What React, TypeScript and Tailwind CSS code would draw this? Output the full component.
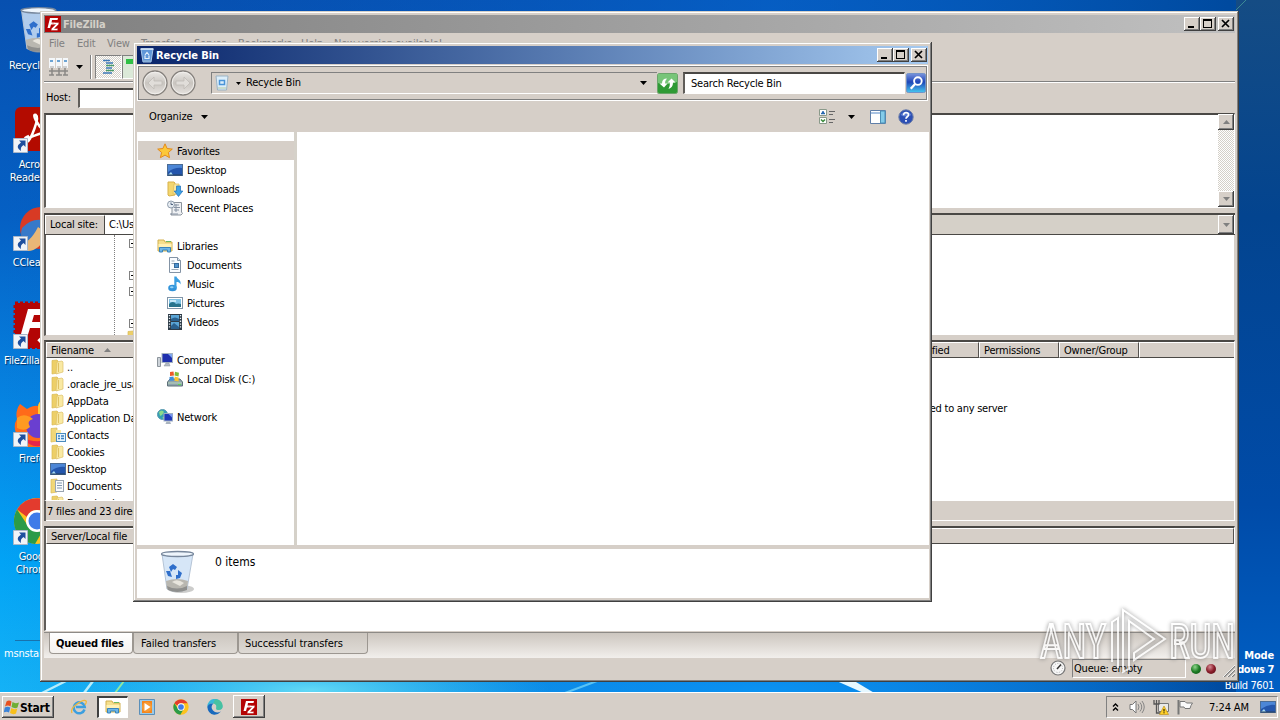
import React from 'react';

type IconName =
  | 'star' | 'desktop' | 'downloads' | 'recent' | 'libraries' | 'document' | 'music' | 'pictures'
  | 'videos' | 'computer' | 'disk' | 'network' | 'folder' | 'contacts' | 'docfolder';

const RAISED = 'bg-[#d6cfc8] shadow-[inset_-1px_-1px_#404040,inset_1px_1px_#fff,inset_-2px_-2px_#808080]';
const FRAME = 'bg-[#d6cfc8] shadow-[inset_-1px_-1px_#404040,inset_1px_1px_#d4d0c8,inset_-2px_-2px_#808080,inset_2px_2px_#fff]';
const SUNKEN = 'border-l-2 border-t-2 border-r border-b border-l-[#605d59] border-t-[#4a4845] border-r-white border-b-white';

/* ---------- icons ---------- */

const Icon = ({ name }: { name: IconName }) => {
  const body: Record<IconName, React.ReactNode> = {
    star: <path d="M8 .8l2.1 4.7 5.2.6-3.9 3.4 1.1 5.2L8 12.1l-4.6 2.6 1.2-5.2L.7 6.1l5.2-.6z" fill="#fcc838" stroke="#e48a1c" />,
    desktop: (
      <>
        <rect x=".5" y="2.5" width="15" height="11" fill="#2456ac" stroke="#4b6c94" />
        <path d="M1 3h14v3Q8 5 1 10z" fill="#4c86d6" />
        <path d="M1 13l3-3 2 3z" fill="#a8dcf5" />
        <path d="M1 13h14" stroke="#26405f" />
      </>
    ),
    downloads: (
      <>
        <path d="M1 1h6l1 1v12l-6 1-1-1z" fill="#f3d66f" stroke="#d8b14a" />
        <path d="M7 3h5v10H6z" fill="#fae9a2" stroke="#d9bb5d" strokeWidth=".7" />
        <path d="M9.5 5h4v5h2.300L11.500 15.500 7.200 10h2.300z" fill="#3fa2e6" stroke="#1c6fb8" strokeWidth=".7" />
      </>
    ),
    recent: (
      <>
        <path d="M5 2.500h9.500V12l1 1.500-1.500 1.500H4l1-2z" fill="#eef0f3" stroke="#8a929b" />
        <path d="M7 5h5M7 7.500h6M7 10h5M9 4v8M3 14h8" stroke="#8793a3" />
        <circle cx="4" cy="4.500" r="3.500" fill="#e6ecf2" stroke="#8f9cab" />
        <path d="M4 2.500v2h2" stroke="#506580" fill="none" />
      </>
    ),
    libraries: (
      <>
        <path d="M1 2h6l1 2h7v9H1z" fill="#f5df8d" stroke="#d2b04e" />
        <path d="M1.500 6h13v3h-13z" fill="#fff1b4" />
        <path d="M2.500 14V9.500h11V14h-3v-2h-5v2z" fill="#6eb6e6" stroke="#3984bd" />
        <path d="M9 3.500h5" stroke="#6dbb60" />
      </>
    ),
    document: (
      <>
        <path d="M2.500.5h8l3 3v12h-11z" fill="#fafcff" stroke="#8393a5" />
        <path d="M4.500 4h3M4.500 6.500h3M4.500 12.500h7" stroke="#9ba7b5" />
        <rect x="7.500" y="6.500" width="4" height="4" fill="#5092cd" stroke="#34699b" />
        <path d="M10.500.5v3h3" fill="#dce6f0" stroke="#8393a5" />
      </>
    ),
    music: (
      <>
        <ellipse cx="5.500" cy="12" rx="4.300" ry="3.200" fill="#3093da" />
        <path d="M7.300 12V.5h2.200c.5 3 5 3 4 8-.8-2-2-2.500-4-2.500v6z" fill="#3b9fe2" />
        <ellipse cx="4.800" cy="11.200" rx="1.800" ry="1" fill="#94d3f7" />
      </>
    ),
    pictures: (
      <>
        <rect x=".5" y="2.500" width="15" height="11" fill="#fff" stroke="#8195a8" />
        <path d="M2 4h12v8H2z" fill="#7fc2e4" />
        <path d="M2 12V9q4-4 7 0 2-1 5 0v3z" fill="#28738c" />
        <path d="M3 6h6" stroke="#dff4ff" strokeWidth="1.500" />
      </>
    ),
    videos: (
      <>
        <path d="M1 0h14v16H1z" fill="#2d3b47" />
        <path d="M4 1h8v6H4zM4 8h8v7H4z" fill="#5aa5d6" />
        <path d="M4 5q4-3 8 0v2H4zM4 12l3-3 5 4v2H4z" fill="#2a608d" />
        <path d="M2.500 1v14M13.500 1v14" stroke="#e6eef3" strokeWidth="1.300" strokeDasharray="1.300 1.500" />
      </>
    ),
    computer: (
      <>
        <path d="M.5 5.500h3v9h-3z" fill="#cdd3d9" stroke="#8d959c" />
        <rect x="5" y="1.500" width="10.500" height="9" fill="#1e2fae" stroke="#a5b3c2" />
        <path d="M11 2l4 0v4z" fill="#7ea6f0" />
        <path d="M9 11h3l1 3H7z" fill="#b3bbc4" stroke="#8a939d" strokeWidth=".5" />
      </>
    ),
    disk: (
      <>
        <path d="M.5 11L3 8h10l2.500 3v4H.5z" fill="#8fa3ad" stroke="#5d7078" />
        <path d="M1 12h14" stroke="#b9d8b9" />
        <path d="M11 13.500h3" stroke="#57df50" />
        <path d="M3 1l3.500-.5.500 4-4 .5z" fill="#ed5b2a" />
        <path d="M8 .8l4 1-.5 3.700-4-1z" fill="#80bd39" />
        <path d="M2.500 6l4-.6.5 4-4.500.4z" fill="#3e8ede" />
        <path d="M7.600 5.500l4 1v4l-4-.8z" fill="#fac52e" />
      </>
    ),
    network: (
      <>
        <circle cx="5.500" cy="5.500" r="5" fill="#339fb5" stroke="#5b9ab0" />
        <path d="M2 3q3-3 5 0l-2 3-2 1zM5 9l3-2v3z" fill="#8ddb8a" />
        <rect x="7" y="4.500" width="8.500" height="7.500" fill="#2038ba" stroke="#9fb0c2" />
        <path d="M11.500 5l4 0v4z" fill="#7896ee" />
        <path d="M9.500 12.500h3.500l1 2.500H8.500z" fill="#aab4be" />
      </>
    ),
    folder: (
      <>
        <path d="M2 1.500l5-.5 1 1v12l-6 1z" fill="#edcf68" stroke="#d9b955" strokeWidth=".7" />
        <path d="M7 3l5-1 1 1v10l-7 2z" fill="#f9e9a3" stroke="#dcc069" strokeWidth=".7" />
        <path d="M8.500 4v9" stroke="#e0c264" />
      </>
    ),
    contacts: (
      <>
        <path d="M1 1.500l6-.5v13l-6 1z" fill="#f1d778" stroke="#d9b955" strokeWidth=".7" />
        <path d="M6 3h5v10H6z" fill="#f9e9a3" />
        <rect x="6.500" y="6.500" width="9" height="8" fill="#e7f3fc" stroke="#4b8bbd" />
        <path d="M8 9h2M11 9h3M8 11.500h2M11 11.500h3" stroke="#3b83c0" strokeWidth="1.300" />
      </>
    ),
    docfolder: (
      <>
        <path d="M1 1.500l6-.5v13l-6 1z" fill="#f1d778" stroke="#d9b955" strokeWidth=".7" />
        <rect x="5.500" y="2.500" width="8" height="11" fill="#f9fbfd" stroke="#9aa5b1" />
        <path d="M7 5h5M7 7.500h5M7 10h5" stroke="#8298af" />
      </>
    ),
  };
  return <svg className="size-4 shrink-0" viewBox="0 0 16 16" fill="none">{body[name]}</svg>;
};

const Bin = ({ className }: { className: string }) => (
  <svg className={className} viewBox="0 0 36 44" fill="none">
    <ellipse cx="21" cy="39" rx="13" ry="4" fill="#9a9a98" opacity=".5" />
    <path d="M2 4l5 35q10 5 20 0l6-35z" fill="#cfe2f6" fillOpacity=".85" stroke="#b5c4d6" />
    <path d="M6 31q11-4 22 0l-1 8q-10 5-20 0z" fill="#b9b7b0" />
    <path d="M7 36q10 5 20 0v4q-10 4-19 0z" fill="#8f8f8d" />
    <path d="M12 32q5-4 12 1l-4 3z" fill="#e8e5dd" />
    <ellipse cx="17.500" cy="4" rx="16" ry="2.500" fill="#eef5fc" stroke="#77879c" strokeWidth="1.300" />
    <path d="M9 17l4-3 4 3-2 3-2-1-2 3zM6 21l4 0 2 6-4-1zM18 20l4 3-2 5-4 1v-4h2z" fill="#2f6fcb" />
  </svg>
);

const SmallBin = () => (
  <svg className="size-4" viewBox="0 0 16 16" fill="none">
    <path d="M2 2h12l-2 13H4z" fill="#5f96d8" stroke="#a8c8ea" />
    <path d="M1.500 2h13" stroke="#dcebfa" strokeWidth="1.500" />
    <path d="M6 8l2-2.500L10 8M6 8.500v3h4v-3" stroke="#e2effb" strokeWidth="1.200" />
    <path d="M4.500 14h7" stroke="#8cb0d6" strokeWidth="1.500" />
  </svg>
);

const FzLogo = ({ className }: { className: string }) => (
  <svg className={className} viewBox="0 0 16 16">
    <path d="M0 0h16v16H0z" fill="#b40404" />
    <path d="M5 2h8l-.5 2H7L6.500 6.500H10L9.500 8.500H6L5 12H2.500z" fill="#fff" />
    <path d="M8 6.500h6l-.5 2-4 4H13l-.5 2H6l.5-2 4-4H8z" fill="#fff" stroke="#b40404" strokeWidth=".4" />
  </svg>
);

const Chrome = ({ className }: { className: string }) => (
  <svg className={className} viewBox="0 0 48 48">
    <circle cx="24" cy="24" r="23" fill="#fcc31e" />
    <path d="M4.100 12.500A23 23 0 0 1 44 13H24a11 11 0 0 0-10 7z" fill="#e33b2e" />
    <path d="M4.100 12.500A23 23 0 0 0 22 47l10-17a10 10 0 0 1-17-1z" fill="#2b9b48" />
    <circle cx="24" cy="24" r="11" fill="#fff" />
    <circle cx="24" cy="24" r="8.500" fill="#3f7be8" />
  </svg>
);

const Shortcut = () => (
  <svg className="absolute left-0 bottom-0 size-[15px]" viewBox="0 0 15 15">
    <path d="M.5.500h14v14H.5z" fill="#f1f4f8" stroke="#aab7c9" />
    <path d="M6 2.500h6.500V9L10.500 7Q7 9 8 13 1.500 9 8 4.600z" fill="#1e4f9e" />
  </svg>
);

const Arrow = ({ up, grey }: { up?: boolean; grey?: boolean }) => (
  <svg className="w-[7px] h-1 shrink-0" viewBox="0 0 7 4">
    <path d={up ? 'M0 4h7L3.500 0z' : 'M0 0h7L3.500 4z'} fill={grey ? '#808080' : '#000'} />
  </svg>
);

/* ---------- shared window parts ---------- */

const CaptionButtons = () => (
  <div className="ml-auto mr-px flex items-center">
    <div className={`w-4 h-3.5 ${RAISED}`}>
      <svg viewBox="0 0 16 14"><path d="M4 9h6v2H4z" /></svg>
    </div>
    <div className={`w-4 h-3.5 ${RAISED}`}>
      <svg viewBox="0 0 16 14"><path d="M3 2h9v9H3zM4 4v6h7V4z" fillRule="evenodd" /></svg>
    </div>
    <div className={`w-4 h-3.5 ml-0.5 ${RAISED}`}>
      <svg viewBox="0 0 16 14"><path d="M4 3l7 7M11 3l-7 7" stroke="#000" strokeWidth="1.700" /></svg>
    </div>
  </div>
);

const HeaderCell = ({ className = '', children }: { className?: string; children?: React.ReactNode }) => (
  <div className={`h-4 shrink-0 flex items-center pl-1 overflow-hidden border-t border-l border-white border-r border-r-[#55524f] border-b border-b-[#4a4845] bg-[#d6cfc8] ${className}`}>
    {children}
  </div>
);

/* ---------- desktop ---------- */

const Wallpaper = () => (
  <svg className="absolute inset-0 size-full" viewBox="0 0 1280 720" preserveAspectRatio="none">
    <defs>
      <linearGradient id="sky" x1="0" y1="0" x2="0" y2="1">
        <stop offset="0" stopColor="#0750b0" />
        <stop offset=".3" stopColor="#0560c4" />
        <stop offset=".6" stopColor="#0689e6" />
        <stop offset=".78" stopColor="#02a3f5" />
        <stop offset="1" stopColor="#19b5f6" />
      </linearGradient>
      <linearGradient id="dark" x1="0" y1="0" x2="1" y2="0">
        <stop offset="0" stopColor="#0550b4" stopOpacity="0" />
        <stop offset=".6" stopColor="#0566cf" stopOpacity=".6" />
        <stop offset=".96" stopColor="#004a9f" />
        <stop offset="1" stopColor="#044d9e" />
      </linearGradient>
      <linearGradient id="rside" x1="0" y1="0" x2="0" y2="1">
        <stop offset="0" stopColor="#154c84" />
        <stop offset=".3" stopColor="#03448f" />
        <stop offset=".7" stopColor="#004ba8" />
        <stop offset="1" stopColor="#0062c8" />
      </linearGradient>
      <radialGradient id="glow"><stop offset="0" stopColor="#62d8f5" /><stop offset="1" stopColor="#37c5f5" stopOpacity="0" /></radialGradient>
      <radialGradient id="glow2"><stop offset="0" stopColor="#0a92f2" /><stop offset="1" stopColor="#0a80e8" stopOpacity="0" /></radialGradient>
    </defs>
    <path d="M0 0h1280v720H0z" fill="url(#sky)" />
    <path d="M0 0h1280v720H0z" fill="url(#dark)" />
    <path d="M1236 0h44v720h-44z" fill="url(#rside)" />
    <ellipse cx="760" cy="690" rx="460" ry="60" fill="url(#glow2)" />
    <ellipse cx="310" cy="690" rx="240" ry="40" fill="url(#glow)" />
    <path d="M42 693l24-12M84 693l9-12" stroke="#b5ecfb" strokeWidth="2.500" />
    <path d="M115 693l9-12" stroke="#8de8a4" strokeWidth="2" />
    <path d="M565 693l32-12" stroke="#58c3f5" strokeWidth="2" />
    <path d="M832 679l34 15h10l-25-15z" fill="#e6f8ff" />
    <path d="M1236 10l12-12" stroke="#3c8b96" />
  </svg>
);

const DesktopIcon = ({ className, label, children, link = true }: { className: string; label: string; children?: React.ReactNode; link?: boolean }) => (
  <div className={`absolute ${className}`}>
    <div className="relative h-12 ml-[13px] w-12">
      {children}
      {link && <Shortcut />}
    </div>
    <div className="pt-[5px] pl-px whitespace-pre leading-[13px] text-white [text-shadow:1px_1px_1px_#00305f]">{label}</div>
  </div>
);

const Desktop = () => (
  <>
    <Wallpaper />
    <DesktopIcon className="left-2 top-1.5" label="Recycle Bin" link={false}><Bin className="h-12 w-11 -ml-1" /></DesktopIcon>
    <DesktopIcon className="left-0 top-[105px]" label={'      Acrobat\n   Reader DC'}>
      <svg viewBox="0 0 48 48">
        <rect x="2" y="2" width="44" height="44" rx="6" fill="#b30b00" />
        <path d="M10 35q25-10 29-9c4 3-3 4-8 0C25 21 18 8 23 10c4 2-5 25-9 27-4 1-4-4 2-6" fill="none" stroke="#fff" strokeWidth="2.500" />
      </svg>
    </DesktopIcon>
    <DesktopIcon className="left-0 top-[203px]" label="    CCleaner">
      <svg viewBox="0 0 48 48">
        <circle cx="28" cy="25" r="21" fill="#d83a24" />
        <path d="M9 25Q24 9 44 24L26 27 12 44Q6 33 9 25z" fill="#3779c9" />
        <path d="M7 41Q17 40 25 24l10 7Q26 48 15 48z" fill="#e9b777" />
      </svg>
    </DesktopIcon>
    <DesktopIcon className="left-0 top-[301px]" label=" FileZilla Client">
      <svg viewBox="0 0 48 48">
        <path d="M2 2h45v45H2z" fill="#b30505" stroke="#b30505" strokeWidth="3" strokeDasharray="3 2" />
        <path d="M15 8h30l-2 6H21l-2 7h14l-2 6H17l-4 13H6z" fill="#fff" />
        <path d="M27 22h19L26 41" stroke="#fff" strokeWidth="5" fill="none" />
      </svg>
    </DesktopIcon>
    <DesktopIcon className="left-0 top-[399px]" label="      Firefox">
      <svg viewBox="0 0 48 48">
        <path d="M4 20Q2 12 7 5l7 5q7-4 11-3 1-5 5-6 0 7 8 11 10 8 8 20a22 22 0 0 1-43 2q-3-8 1-14z" fill="#ff6a1a" />
        <path d="M25 8q0-5 5-7 0 7 8 11 6 6 7 12-10-12-20-8z" fill="#ffcb36" />
        <circle cx="25" cy="27" r="12" fill="#6a3fd0" />
        <path d="M4 29q8 4 13-1-4-6 3-8-9-7-16-1z" fill="#ff9a21" />
        <path d="M9 38q14 8 30 1l-5 6q-15 7-25-7z" fill="#e6254b" />
      </svg>
    </DesktopIcon>
    <DesktopIcon className="left-0 top-[497px]" label={'      Google\n     Chrome'}><Chrome className="size-12" /></DesktopIcon>
    <div className="absolute left-[15px] top-[640px] w-12 h-px bg-[#1872ad]" />
    <div className="absolute left-1 top-[647px] text-white">msnstall.exe</div>
    <div className="absolute right-1.5 top-[649px] text-right text-white leading-[14px]">
      <div className="font-bold [word-spacing:3px]">Test Mode</div>
      <div className="font-bold tracking-[-0.4px]">Windows 7</div>
      <div className="mt-0.5 tracking-[-0.4px]">Build 7601</div>
    </div>
  </>
);

/* ---------- FileZilla ---------- */

const files: { name: string; icon: IconName }[] = [
  { name: '..', icon: 'folder' },
  { name: '.oracle_jre_usage', icon: 'folder' },
  { name: 'AppData', icon: 'folder' },
  { name: 'Application Data', icon: 'folder' },
  { name: 'Contacts', icon: 'contacts' },
  { name: 'Cookies', icon: 'folder' },
  { name: 'Desktop', icon: 'desktop' },
  { name: 'Documents', icon: 'docfolder' },
  { name: 'Downloads', icon: 'folder' },
];

const TreeBox = ({ className }: { className: string }) => (
  <div className={`absolute left-[83px] size-[9px] border border-[#808080] bg-white flex items-center justify-center ${className}`}>
    <div className="w-[5px] h-px bg-black" />
  </div>
);

const FileZilla = () => (
  <div className={`absolute left-10 top-[11px] w-[1199px] h-[671px] p-1 flex flex-col overflow-hidden ${FRAME}`}>
    <div className="h-[18px] shrink-0 flex items-center pl-px bg-linear-to-r from-[#808080] to-[#c0c0c0]">
      <FzLogo className="size-4" />
      <span className="ml-0.5 pt-0.5 font-bold text-[#d4d0c8]">FileZilla</span>
      <CaptionButtons />
    </div>
    <div className="h-[19px] pt-0.5 shrink-0 flex items-center text-[#808080]">
      <span className="w-7 ml-[5px]">File</span>
      <span className="w-[30px]">Edit</span>
      <span className="w-[34px]">View</span>
      <span className="w-[53px]">Transfer</span>
      <span className="w-11">Server</span>
      <span className="w-[63px]">Bookmarks</span>
      <span className="w-[33px]">Help</span>
      <span>New version available!</span>
    </div>
    <div className="h-[31px] shrink-0 flex items-center border-b border-b-white shadow-[inset_0_-1px_#808080]">
      <svg className="size-5 ml-[5px]" viewBox="0 0 20 20">
        <path d="M0 1h6v10H0zM7 1h6v10H7zM14 1h5v10h-5z" fill="#f4f7fa" />
        <path d="M1 4h3M8 4h3M15 4h3" stroke="#6ca4d4" strokeWidth="2" />
        <path d="M1 10h4M8 10h4M14 10h4" stroke="#a9a9a9" />
        <path d="M3 11v7M10 11v7M16 11v7M0 14h19M0 18h5M7 18h6M14 18h5" stroke="#8b8985" strokeWidth="1.500" />
      </svg>
      <div className="ml-[7px]"><Arrow /></div>
      <div className="ml-[7px] mr-[3px] h-6 w-0.5 border-l border-[#808080] bg-white" />
      <div className="w-[27px] h-6 border border-t-[#808080] border-l-[#808080] border-white bg-[repeating-conic-gradient(#d4d0c8_0_25%,#fff_0_50%)] bg-[length:2px_2px] flex items-center justify-center">
        <svg className="size-4" viewBox="0 0 16 16">
          <path d="M2 1.500h7M5 4h7M5 9h6M2 14h9" stroke="#3d78b8" strokeWidth="1.300" />
          <path d="M5 6.500h8M5 11.500h8" stroke="#4b9c68" strokeWidth="1.300" />
        </svg>
      </div>
      <div className="w-[27px] h-6 border border-t-[#808080] border-l-[#808080] border-white bg-[#dbe9d8] pt-[3px] pl-[3px]">
        <div className="h-[5px] bg-[#2fc045]" />
      </div>
    </div>
    <div className="h-[30px] shrink-0 flex items-center pl-0.5">
      <span className="w-8">Host:</span>
      <div className={`w-[120px] h-5 bg-white ${SUNKEN}`} />
    </div>
    <div className={`h-[95px] shrink-0 flex justify-end bg-white ${SUNKEN}`}>
      <div className="w-4 flex flex-col bg-[repeating-conic-gradient(#d4d0c8_0_25%,#fff_0_50%)] bg-[length:2px_2px]">
        <div className={`-mt-px h-4 flex items-center justify-center ${RAISED}`}><Arrow up grey /></div>
        <div className={`h-4 mt-auto flex items-center justify-center ${RAISED}`}><Arrow grey /></div>
      </div>
    </div>

    <div className="mt-[5px] h-[22px] shrink-0 flex bg-[#d6cfc8] border-t-2 border-b border-l border-[#4a4845]">
      <div className="w-[60px] pl-1 flex items-center border-t border-l border-white border-r border-r-[#4a4845]">Local site:</div>
      <div className="w-[520px] pl-1 flex items-center bg-white">C:\Users\admin\</div>
      <div className="flex-1 flex justify-end bg-[#d5d0c8] border-r border-white">
        <div className={`w-4 flex items-center justify-center ${RAISED}`}><Arrow grey /></div>
      </div>
    </div>
    <div className="relative h-[101px] shrink-0 bg-white border-l-2 border-l-[#605d59] border-r border-r-[#d6cfc8] border-b border-b-[#d6cfc8] overflow-hidden">
      <div className="absolute left-[68px] top-0 h-full border-l border-dotted border-[#808080]" />
      <TreeBox className="top-1" />
      <TreeBox className="top-9" />
      <TreeBox className="top-[52px]" />
      <TreeBox className="top-[84px]" />
      <div className="absolute left-[80px] top-[95px]"><Icon name="folder" /></div>
    </div>

    <div className={`mt-1 h-[161px] shrink-0 flex bg-white ${SUNKEN}`}>
      <div className="w-[592px] flex flex-col overflow-hidden">
        <HeaderCell className="w-full gap-2.5"><span className="pt-0.5">Filename</span> <Arrow up grey /></HeaderCell>
        {files.map((f) => (
          <div key={f.name} className="h-[17px] shrink-0 flex items-center pl-1">
            <Icon name={f.icon} />
            <span className="ml-px pt-0.5">{f.name}</span>
          </div>
        ))}
      </div>
      <div className="flex-1">
        <div className="flex justify-end">
          <HeaderCell className="flex-1" />
          <HeaderCell className="w-[100px]"><span className="pt-0.5 pl-px">Last modified</span></HeaderCell>
          <HeaderCell className="w-20"><span className="pt-0.5">Permissions</span></HeaderCell>
          <HeaderCell className="w-20"><span className="pt-0.5">Owner/Group</span></HeaderCell>
          <HeaderCell className="w-[95px] border-r-0" />
        </div>
        <div className="mt-11 pr-[227px] text-right tracking-[-0.25px]">Not connected to any server</div>
      </div>
    </div>
    <div className="h-5 pt-0.5 shrink-0 flex items-center pl-px border-l-2 border-[#605d59] shadow-[inset_0_-1px_#fff,inset_-1px_0_#fff]">
      7 files and 23 directories. Total size: 2,118,456 bytes
    </div>

    <div className={`mt-[5px] h-[105px] shrink-0 bg-white ${SUNKEN}`}>
      <HeaderCell className="w-full"><span className="pt-0.5">Server/Local file</span></HeaderCell>
    </div>
    <div className="h-0.5 shrink-0 border-b border-[#8d8a86]" />
    <div className="h-[25px] shrink-0 flex items-start pl-[5px] bg-linear-to-b from-[#ccc6bf] to-[#f2efec]">
      <div className="w-[84px] h-[21px] pl-1.5 pt-0.5 flex items-center font-bold bg-linear-to-b from-white to-[#f4f1ee] rounded-b-sm border border-t-0 border-[#9c9791]">Queued files</div>
      <div className="w-[105px] h-[21px] pl-[7px] pt-0.5 flex items-center tracking-[-0.05px] bg-linear-to-b from-[#ccc6bf] to-[#dedad5] rounded-b-sm border border-t-0 border-[#9c9791]">Failed transfers</div>
      <div className="w-[130px] h-[21px] pl-1.5 pt-0.5 flex items-center tracking-[-0.1px] bg-linear-to-b from-[#ccc6bf] to-[#dedad5] rounded-b-sm border border-t-0 border-[#9c9791]">Successful transfers</div>
    </div>
    <div className="h-5 shrink-0 flex items-center justify-end">
      <svg className="size-4 mr-[6px]" viewBox="0 0 16 16">
        <circle cx="8" cy="8" r="7" fill="#f7f7f7" stroke="#777" strokeWidth="1.200" />
        <circle cx="8" cy="8" r="4.500" fill="none" stroke="#aaa" strokeDasharray="1 1.500" />
        <path d="M7 9l4-4.500" stroke="#333" strokeWidth="1.500" />
      </svg>
      <div className="w-[114px] h-[19px] mt-px flex items-center pl-px pt-px border border-[#808080] border-r-white border-b-white">Queue: empty</div>
      <div className="ml-[5px] mt-px size-2.5 rounded-full bg-radial-[at_40%_30%] from-[#8fd58c] via-[#1c7c24] to-[#0d4a14]" />
      <div className="ml-[5px] mt-px size-2.5 rounded-full bg-radial-[at_40%_30%] from-[#d58c94] via-[#8a1c2a] to-[#4a0d14]" />
      <svg className="ml-[7px] mt-1.5 size-3" viewBox="0 0 12 12">
        <path d="M1 12L12 1M5 12l7-7M9 12l3-3" stroke="#808080" strokeWidth="1.400" />
        <path d="M0 12L12 0M4 12l8-8M8 12l4-4" stroke="#fff" strokeWidth=".8" />
      </svg>
    </div>
  </div>
);

/* ---------- Recycle Bin ---------- */

const nav: { title: string; icon: IconName; items: { name: string; icon: IconName }[] }[] = [
  {
    title: 'Favorites',
    icon: 'star',
    items: [
      { name: 'Desktop', icon: 'desktop' },
      { name: 'Downloads', icon: 'downloads' },
      { name: 'Recent Places', icon: 'recent' },
    ],
  },
  {
    title: 'Libraries',
    icon: 'libraries',
    items: [
      { name: 'Documents', icon: 'document' },
      { name: 'Music', icon: 'music' },
      { name: 'Pictures', icon: 'pictures' },
      { name: 'Videos', icon: 'videos' },
    ],
  },
  { title: 'Computer', icon: 'computer', items: [{ name: 'Local Disk (C:)', icon: 'disk' }] },
  { title: 'Network', icon: 'network', items: [] },
];

const NavButton = ({ flip }: { flip?: boolean }) => (
  <svg className={`size-[26px] shrink-0 ${flip ? '-scale-x-100' : ''}`} viewBox="0 0 26 26">
    <defs>
      <linearGradient id="orb" x1="0" y1="0" x2="0" y2="1">
        <stop offset="0" stopColor="#eceae7" />
        <stop offset=".5" stopColor="#c9c5c0" />
        <stop offset="1" stopColor="#e6e3df" />
      </linearGradient>
    </defs>
    <circle cx="13" cy="13" r="12" fill="url(#orb)" stroke="#85817d" strokeWidth="1.300" />
    <circle cx="13" cy="13" r="10.800" fill="none" stroke="#f1efec" />
    <path d="M6 13l6-6v4h8v4h-8v4z" fill="#e0ddd9" stroke="#bfbbb6" strokeWidth=".8" />
  </svg>
);

const RecycleBin = () => (
  <div className={`absolute left-[133px] top-[42px] w-[799px] h-[560px] p-1 flex flex-col ${FRAME}`}>
    <div className="h-[18px] shrink-0 flex items-center pl-0.5 bg-linear-to-r from-[#0a246a] to-[#a6caf0]">
      <SmallBin />
      <span className="ml-px pt-0.5 font-bold tracking-[-0.1px] text-white">Recycle Bin</span>
      <CaptionButtons />
    </div>
    <div className="mt-px h-9 shrink-0 border border-white">
      <div className="h-full flex items-center border border-[#808080] pl-[3px]">
        <NavButton />
        <div className="ml-0.5"><NavButton flip /></div>
        <div className="ml-[15px] w-[446px] h-[22px] shrink-0 flex items-center border border-[#808080] border-b-white border-r-0 pl-0.5">
          <svg className="size-4" viewBox="0 0 16 16">
            <path d="M2 1h12l-1.500 14h-9z" fill="#dceefa" stroke="#9ab2c4" />
            <path d="M5.500 5.500h5v4h-5z" fill="none" stroke="#4a94d8" strokeWidth="1.500" />
            <path d="M4 13h8" stroke="#b4c8a0" />
          </svg>
          <svg className="ml-[6px] w-[5px] h-[3px]" viewBox="0 0 5 3"><path d="M0 0h5L2.500 3z" /></svg>
          <span className="ml-[5px]">Recycle Bin</span>
          <div className="ml-auto mr-2.5"><Arrow /></div>
        </div>
        <svg className="size-[21px] shrink-0" viewBox="0 0 21 21">
          <rect x=".5" y=".5" width="20" height="20" rx="2" fill="#2f9a35" stroke="#6aa56a" />
          <path d="M1 1h19v8Q10 13 1 10z" fill="#77c578" />
          <path d="M2.500 10.500l4.500 4 3.500-4H8q0-3 2-5-5 0-5 5zM10.500 9.500l4-4 4 4h-2.500q0 5-4.500 6.500 1.500-2 1.500-6.500z" fill="#fff" />
        </svg>
        <div className={`ml-[5px] w-[222px] h-[22px] shrink-0 flex items-center pl-1.5 bg-white ${SUNKEN}`}>Search Recycle Bin</div>
        <svg className="ml-px size-5 shrink-0" viewBox="0 0 21 21">
          <defs>
            <linearGradient id="srch" x1="0" y1="0" x2="0" y2="1">
              <stop offset="0" stopColor="#7a94dd" /><stop offset=".45" stopColor="#1e46b8" /><stop offset="1" stopColor="#45c8f0" />
            </linearGradient>
          </defs>
          <rect x=".5" y=".5" width="20" height="20" rx="2" fill="url(#srch)" stroke="#6e8fc8" />
          <circle cx="12.500" cy="8.500" r="4" fill="none" stroke="#fff" strokeWidth="2" />
          <path d="M9.500 11.500L5 16.500" stroke="#fff" strokeWidth="2.500" />
        </svg>
      </div>
    </div>
    <div className="h-[31px] shrink-0 flex items-center pl-3">
      <span className="tracking-[-0.1px]">Organize</span>
      <div className="ml-2"><Arrow /></div>
      <svg className="ml-auto size-4" viewBox="0 0 16 16">
        <path d="M.5.500h7v6h-7zM.5 8.500h7v6h-7z" fill="#fff" stroke="#8a9a8a" />
        <path d="M2 4.500h4M3 3h2" stroke="#2868b0" strokeWidth="1.500" />
        <path d="M2 10.500l2 2 2-2" stroke="#3a8a3a" fill="none" strokeWidth="1.500" />
        <path d="M10 2.500h6M10 5.500h4M10 10.500h6M10 13.500h4" stroke="#666" />
      </svg>
      <div className="ml-[13px]"><Arrow /></div>
      <svg className="ml-[15px] size-4" viewBox="0 0 16 16">
        <path d="M.5 1.500h15v13H.5z" fill="#fff" stroke="#5f7ea8" />
        <path d="M1 4h9" stroke="#6f9bd0" strokeWidth="1.200" />
        <path d="M10.500 2h4.500v12h-4.500z" fill="#83cbe9" stroke="#4a8fb5" />
      </svg>
      <svg className="ml-3 mr-3.5 size-4" viewBox="0 0 16 16">
        <circle cx="8" cy="8" r="7.200" fill="#2c4fb4" stroke="#6d7ea8" />
        <path d="M2.500 6a6 5 0 0 1 11 0q-5 3-11 0z" fill="#7d9be5" opacity=".6" />
        <path d="M5.600 6.200C5.600 2.500 10.700 3 10.500 6 10.300 7.800 8 7.800 8 9.800M8 11v1.800" stroke="#fff" strokeWidth="1.700" fill="none" />
      </svg>
    </div>

    <div className="h-[413px] shrink-0 flex bg-white mr-[-1px]">
      <div className="w-[157px] pt-[9px] pl-px flex flex-col gap-[19px]">
        {nav.map((g, i) => (
          <div key={g.title}>
            <div className={`h-[19px] flex items-center gap-1 pl-[19px] ${i === 0 ? 'bg-[#d6cfc8]' : ''}`}>
              <Icon name={g.icon} />
              <span className="pt-0.5">{g.title}</span>
            </div>
            {g.items.map((it) => (
              <div key={it.name} className="h-[19px] flex items-center gap-1 pl-[29px]">
                <Icon name={it.icon} />
                <span className="pt-0.5">{it.name}</span>
              </div>
            ))}
          </div>
        ))}
      </div>
      <div className="w-[3px] bg-[#d5d1c9]" />
    </div>
    <div className="mt-1 flex-1 mr-[-1px] flex bg-white pl-[23px] pt-px">
      <Bin className="w-9 h-11" />
      <span className="ml-[19px] mt-1 text-[12px] leading-4 tracking-normal">0 items</span>
    </div>
  </div>
);

/* ---------- taskbar ---------- */

const Taskbar = () => (
  <div className="relative h-7 shrink-0 mt-auto flex items-center border-t border-white bg-[#d6cfc8] pl-0.5 pr-0.5">
    <div className={`w-[52px] h-[22px] flex items-center pl-0.5 ${RAISED}`}>
      <svg className="size-4" viewBox="0 0 16 16">
        <path d="M2.500 2.500Q5 .5 7.500 2.500L6.500 7.500Q4 5.700 1 7.500z" fill="#e8501f" />
        <path d="M8.500 3Q11 5 15 3.500L13.500 8.500Q11 10 7.500 8z" fill="#6fae35" />
        <path d="M.8 8.500Q3.500 7 6.300 8.500L5 13.500Q2.500 12-.3 13.500z" fill="#3b83d8" />
        <path d="M7.300 9Q10 11 13.300 9.500L12 14.500Q9 16 6 14z" fill="#f8c01c" />
      </svg>
      <span className="pt-0.5 text-[12px] font-bold">Start</span>
    </div>
    <svg className="ml-[17px] size-4" viewBox="0 0 16 16">
      <path d="M13.500 10.500A5.500 5.500 0 1 1 13.700 8H5" fill="none" stroke="#3c9fdf" strokeWidth="2.500" />
      <path d="M1 14Q-1 10 6 5t9-3q1 1-1 4" fill="none" stroke="#f0b83a" strokeWidth="1.300" />
    </svg>
    <div className="ml-[10px] w-[31px] h-[22px] bg-white flex items-center justify-center border border-white border-t-2 border-l-2 border-t-[#404040] border-l-[#404040]">
      <Icon name="libraries" />
    </div>
    <svg className="ml-[11px] size-4" viewBox="0 0 16 16">
      <path d="M.5.500h15v15H.5z" fill="#9ccae8" stroke="#5b8fb9" />
      <path d="M3 2h10v12H3z" fill="#f5861d" />
      <circle cx="8" cy="8" r="5" fill="#f79a35" />
      <path d="M5.500 4l6 4-6 4z" fill="#fff" />
    </svg>
    <Chrome className="ml-[18px] size-4" />
    <svg className="ml-[18px] size-4" viewBox="0 0 16 16">
      <path d="M.3 8A7.700 7.700 0 0 1 15.700 7q0 4-4.500 4-2.500 0-2-2 1-4-3-4.500T.3 8z" fill="#38b9d9" />
      <path d="M8 .3Q15.500.5 15.700 7q0 4-4.500 4-2.500 0-2-2 1-4-3-4.500z" fill="#51c77d" opacity=".6" />
      <path d="M.3 8q1-4 6-3.500Q3 8 6 11.500t8 1Q11 16 7 15.700 1 15 .3 8z" fill="#1869bd" />
    </svg>
    <div className={`ml-[10px] w-8 h-[23px] flex items-center justify-center ${RAISED}`}><FzLogo className="size-4" /></div>

    <div className="ml-auto w-[172px] h-[22px] flex items-center border border-[#808080] border-r-white border-b-white">
      <svg className="ml-[5px] w-[7px] h-2.5" viewBox="0 0 7 10">
        <path d="M1 4.500L3.500 2 6 4.500M1 8.500L3.500 6 6 8.500" fill="none" stroke="#000" strokeWidth="1.400" />
      </svg>
      <svg className="ml-2.5 size-4" viewBox="0 0 16 16">
        <path d="M1 5.500h2.500L7 2v12L3.500 10.500H1z" fill="#fff" stroke="#777" />
        <path d="M9 5q2 3 0 6M11 3.500q3.500 4.500 0 9M13 2q4.500 6 0 12" fill="none" stroke="#858585" />
      </svg>
      <svg className="ml-2 size-4" viewBox="0 0 16 16">
        <path d="M5.500 4.500h10v8h-10z" fill="#e9e9e9" stroke="#777" />
        <path d="M1 1v4h5V1M3.500 1v13h4" fill="none" stroke="#555" strokeWidth="1.300" />
        <path d="M11 7l4.500 8.500h-9z" fill="#ffd028" stroke="#b88a10" strokeWidth=".6" />
        <path d="M11 10v2.500M11 13.300v1" stroke="#000" />
      </svg>
      <svg className="ml-2 size-4" viewBox="0 0 16 16">
        <path d="M1.500 1v14.500" stroke="#777" strokeWidth="2" />
        <path d="M3 2.500h5l1.500 1.500h6L14 6.500l-1 3H8L7 8H3z" fill="#fafafa" stroke="#777" />
      </svg>
      <span className="ml-4 pt-0.5 tracking-[-0.1px]">7:24 AM</span>
      <div className="ml-auto mr-px"><Icon name="desktop" /></div>
    </div>
  </div>
);

const Watermark = () => (
  <svg className="absolute left-[1036px] top-[604px] w-[204px] h-[72px] opacity-80 drop-shadow-[0_0_2px_#666]" viewBox="0 0 204 72">
    <g fill="none" stroke="#fff" strokeWidth="2" fontFamily="Roboto, sans-serif" fontSize="48">
      <text x="4" y="54" textLength="66" lengthAdjust="spacingAndGlyphs">ANY</text>
      <text x="133" y="54" textLength="66" lengthAdjust="spacingAndGlyphs">RUN</text>
      <path d="M76 58V18l6-4v50M87 68V6l42 29-31 21v-7l20-14-25-18v48z" />
    </g>
  </svg>
);

export default function App() {
  return (
    <div className="relative w-[1280px] h-[720px] overflow-hidden flex flex-col text-[11px] leading-[14px] tracking-[-0.2px] text-black whitespace-nowrap font-['DejaVu_Sans_Condensed','DejaVu_Sans',sans-serif] [font-stretch:condensed]">
      <Desktop />
      <FileZilla />
      <RecycleBin />
      <Taskbar />
      <Watermark />
    </div>
  );
}
